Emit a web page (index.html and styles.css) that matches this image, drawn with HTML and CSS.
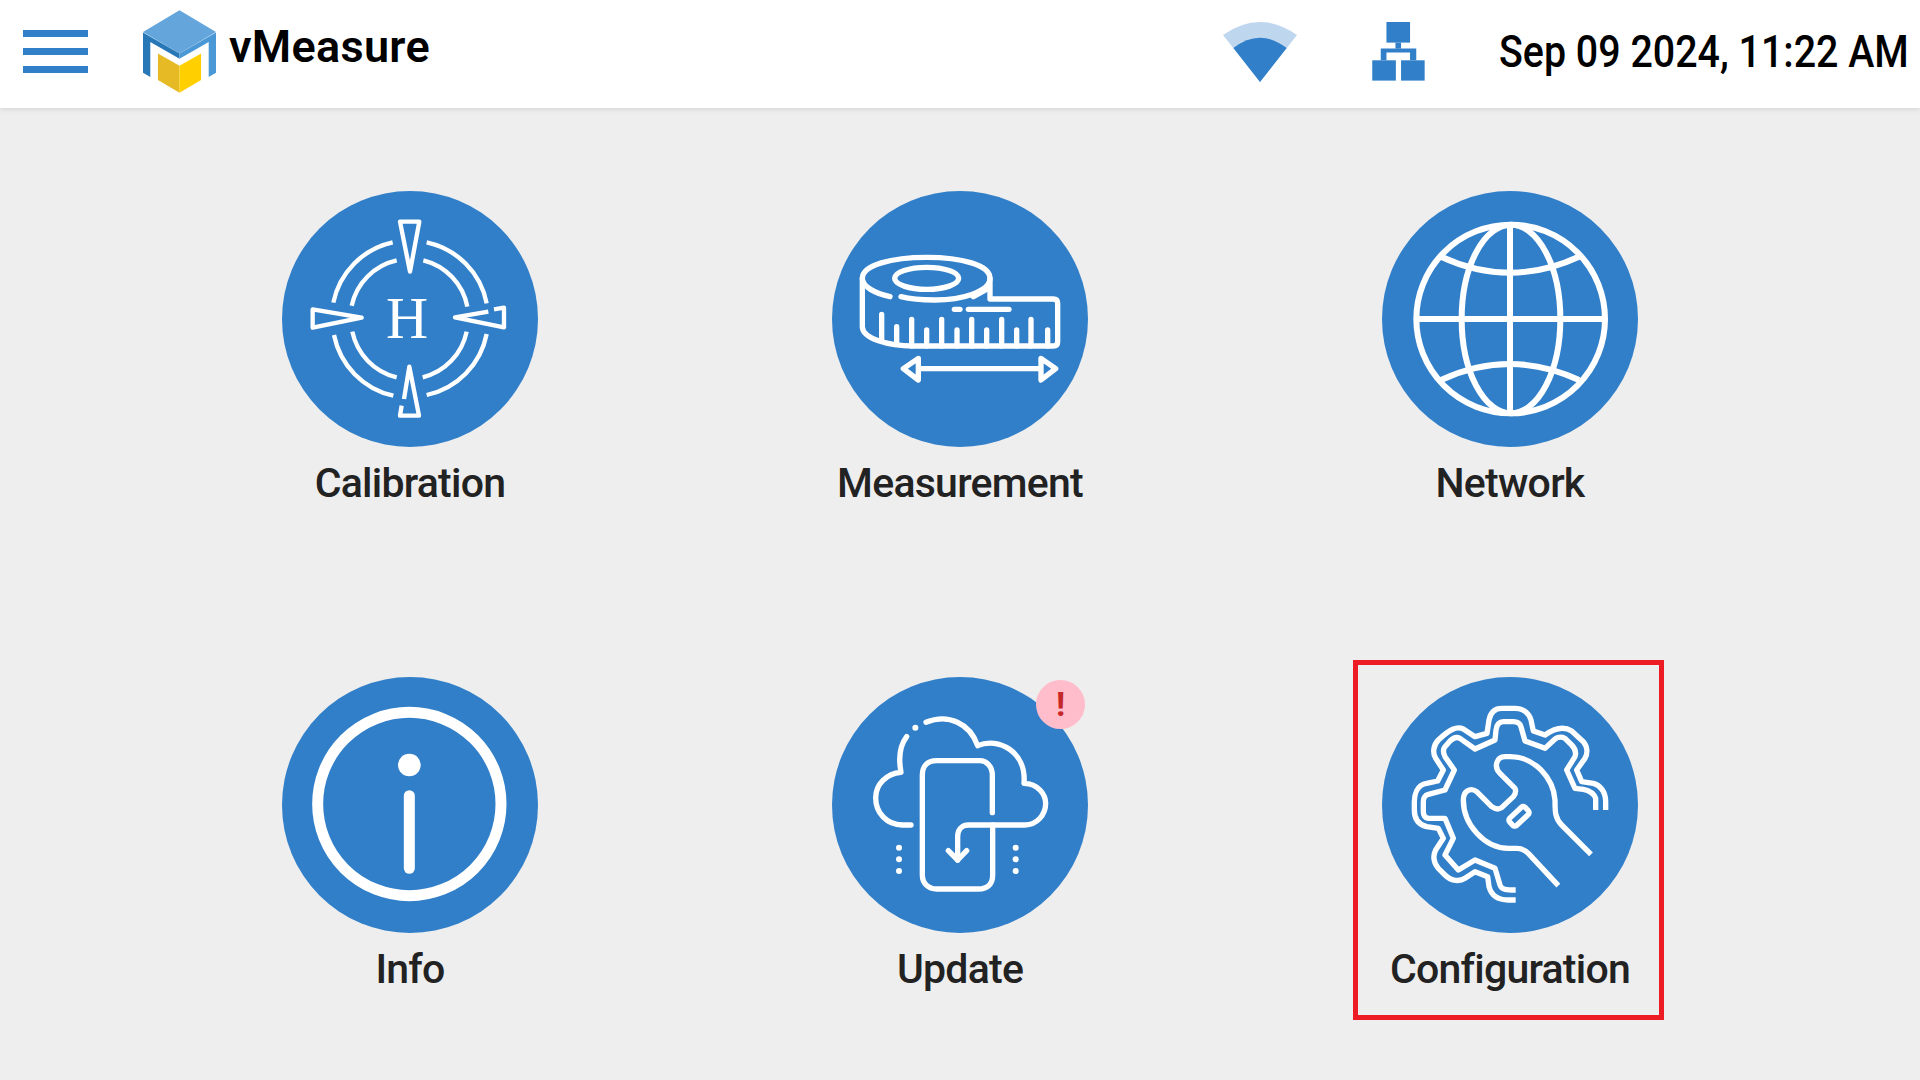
FILE: index.html
```html
<!DOCTYPE html>
<html lang="en">
<head>
  <meta charset="UTF-8">
  <meta name="viewport" content="width=device-width, initial-scale=1.0">
  <title>vMeasure</title>
  <link rel="stylesheet" href="styles.css">
</head>
<body>

  <header class="topbar">
    <div class="menu-btn">
      <span></span>
      <span></span>
      <span></span>
    </div>

    <svg class="logo" viewBox="430 30 220 248">
      <polygon fill="#64a6dc" points="430,95 540,30 650,95 540,160"/>
      <polygon fill="#2878b8" points="430,97 540,160 540,176 452,125 452,231 430,218"/>
      <polygon fill="#4a98d6" points="650,97 540,160 540,176 628,125 628,231 650,218"/>
      <polygon fill="#e5ba25" points="475,160 540,197 540,278 475,240"/>
      <polygon fill="#ffcf00" points="605,160 540,197 540,278 605,240"/>
    </svg>
    <div class="brand">vMeasure</div>

    <div class="status">
      <!-- Wifi -->
      <svg class="wifi-icon" viewBox="0 0 74 60">
        <path fill="#bed6ee" d="M0 13 Q37 -13 74 13 L37 60 Z"/>
        <path fill="#317fc9" d="M10.4 26 Q37 5.4 63.7 26 L37 60 Z"/>
      </svg>
      <!-- Wired network -->
      <svg class="lan-icon" viewBox="0 0 52.5 59">
        <g fill="#317fc9">
          <rect x="14.2" y="0" width="23.6" height="20.6"/>
          <rect x="23.2" y="20.6" width="5.6" height="6"/>
          <path d="M8.5 26.6 H44 V38.3 H37.8 V30.6 H14.2 V38.3 H8.5 Z"/>
          <rect x="0" y="38.3" width="23.6" height="20.3"/>
          <rect x="28.8" y="38.3" width="23.6" height="20.3"/>
        </g>
      </svg>
      <div class="clock">Sep 09 2024, 11:22 AM</div>
    </div>
  </header>

  <main class="tiles">

    <div class="tile">
      <div class="disc">
        <svg viewBox="36 33 768 768">
          <g class="line thin">
            <path d="M390 125 H448 L420 275 Z"/>
            <path d="M128 388 V443 L275 413 Z"/>
            <path d="M655 395 L555 412 L702 442 V383 L672 388"/>
            <path d="M402 657 L418 560 L447 707 H390 L395 677"/>
            <path d="M190 368 A233 233 0 0 1 368 187"/>
            <path d="M470 187 A233 233 0 0 1 650 370"/>
            <path d="M192 465 A233 233 0 0 0 370 647"/>
            <path d="M470 645 A233 233 0 0 0 650 462"/>
            <path d="M245 377 A178 178 0 0 1 380 241"/>
            <path d="M460 241 A178 178 0 0 1 592 380"/>
            <path d="M247 455 A178 178 0 0 0 380 592"/>
            <path d="M458 592 A178 178 0 0 0 590 455"/>
          </g>
          <text class="disc-letter" x="411" y="475">H</text>
        </svg>
      </div>
      <div class="tile-label">Calibration</div>
    </div>

    <div class="tile">
      <div class="disc">
        <svg viewBox="21 33 768 768">
          <g class="line round">
            <path d="M195 350 C150 340 112 320 112 295 C112 255 200 232 305 232 C410 232 495 255 495 295 C495 335 410 360 330 360 C290 360 255 357 228 350"/>
            <ellipse cx="305" cy="295" rx="96" ry="33"/>
            <path d="M112 295 V440 C112 475 190 498 265 498 H685 Q698 498 698 485 V370 Q698 357 685 357 H495 V295"/>
            <path d="M445 350 L490 325"/>
            <path d="M170 403 V480 M215 440 V490 M260 418 V498 M305 450 V498 M350 418 V498 M396 450 V498 M440 418 V498 M485 450 V498 M530 418 V498 M575 450 V498 M618 418 V498 M668 450 V498"/>
            <path d="M388 388 H405 M430 388 H552"/>
            <path d="M285 566 H645"/>
            <path d="M280 535 L235 566 L280 600 Z"/>
            <path d="M648 535 L692 566 L648 600 Z"/>
          </g>
        </svg>
      </div>
      <div class="tile-label">Measurement</div>
    </div>

    <div class="tile">
      <div class="disc">
        <svg viewBox="21 33 768 768">
          <g class="line thick">
            <circle cx="407" cy="417" r="283"/>
            <ellipse cx="408" cy="417" rx="148" ry="283"/>
            <path d="M405 135 V700"/>
            <path d="M124 417 H690"/>
            <path d="M198 230 Q405 326 612 230"/>
            <path d="M198 600 Q405 504 612 600"/>
          </g>
        </svg>
      </div>
      <div class="tile-label">Network</div>
    </div>

    <div class="tile">
      <div class="disc">
        <svg viewBox="36 36 768 768">
          <circle class="line info-ring" cx="418" cy="417" r="275"/>
          <circle class="dot" cx="418" cy="300" r="34"/>
          <path class="line info-ring round" d="M418 392 V610"/>
        </svg>
      </div>
      <div class="tile-label">Info</div>
    </div>

    <div class="tile">
      <div class="disc">
        <svg viewBox="21 36 768 768">
          <g class="line round">
            <path d="M258 480 H232 C185 480 152 443 152 398 C152 358 185 325 228 322 C222 290 222 245 245 215"/>
            <path d="M303 172 C370 145 435 175 458 242 C520 215 605 260 597 355 C640 355 662 390 662 415 C662 450 635 480 600 480 H430 C410 480 398 495 398 515 V585"/>
            <path d="M370 557 L398 585 L425 557"/>
            <path d="M502 443 V330 C502 305 485 287 465 287 H335 C305 287 292 305 292 330 V630 C292 655 310 672 335 672 H460 C490 672 503 655 503 630 V480"/>
          </g>
          <g class="dot">
            <circle cx="271" cy="188" r="9"/>
            <circle cx="222" cy="548" r="9"/>
            <circle cx="222" cy="583" r="9"/>
            <circle cx="222" cy="618" r="9"/>
            <circle cx="572" cy="548" r="9"/>
            <circle cx="572" cy="583" r="9"/>
            <circle cx="572" cy="618" r="9"/>
          </g>
        </svg>
        <span class="badge">!</span>
      </div>
      <div class="tile-label">Update</div>
    </div>

    <div class="tile">
      <div class="disc">
        <svg viewBox="111 66 768 768">
          <g class="line gear">
            <path d="M782 465 V440 C782 410 765 390 745 385 L710 380 L695 345 L720 310 C728 295 728 275 715 260 L680 228 C660 215 635 215 600 240 L565 228 L558 195 C550 170 530 160 510 160 H470 C445 160 436 175 432 195 L426 235 L390 245 L355 222 C335 213 315 222 280 255 C265 270 262 295 272 310 L295 345 L278 378 L245 385 C215 390 208 420 208 440 V465 C208 495 225 510 245 515 L280 520 L295 550 L272 585 C262 605 268 625 280 640 L300 660 C320 680 345 680 360 670 L390 650 L428 665 L432 695 C440 725 465 735 490 735 H512"/>
            <path d="M752 465 V430 C745 410 725 405 715 403 L690 400 L665 345 L690 305 C695 290 690 280 680 270 L660 250 C650 245 640 245 630 252 L600 280 L540 258 L528 215 C525 205 515 200 505 200 H475 C462 200 455 210 453 225 L450 255 L390 282 L345 250 C335 245 325 248 315 258 L300 275 C292 285 295 295 300 305 L328 345 L300 405 L250 418 C240 420 235 430 235 440 V470 C235 480 240 488 250 490 L300 490 L325 550 L300 600 L340 645 L390 615 L450 640 L465 690 C470 705 485 705 512 705"/>
            <path d="M738 598 L650 510 C630 490 630 470 630 435 C625 370 570 305 495 305 H480 C455 305 445 335 465 355 L510 400 C515 410 510 418 505 425 L470 458 C460 465 450 462 440 455 L395 410 C375 395 355 410 355 435 C355 510 420 580 490 580 H515 C530 580 540 585 550 595 L640 692"/>
            <rect x="-32" y="-15" width="64" height="30" rx="8" transform="translate(522 484) rotate(-43)"/>
          </g>
        </svg>
      </div>
      <div class="tile-label">Configuration</div>
      <div class="highlight"></div>
    </div>

  </main>

</body>
</html>
```

FILE: styles.css
```css
* {
  margin: 0;
  padding: 0;
  box-sizing: border-box;
}

body {
  font-family: Roboto, "Liberation Sans", sans-serif;
  height: 100vh;
  overflow: hidden;
  background-color: #eeeeee;
}

.topbar {
  display: flex;
  align-items: center;
  height: 108px;
  padding: 0 12px 5px 23px;
  background-color: white;
  box-shadow: 0 1px 5px rgba(0, 0, 0, 0.12);
}

.menu-btn {
  display: flex;
  flex-direction: column;
  gap: 11px;
  width: 65px;
}

.menu-btn span {
  height: 7px;
  background-color: #317fc9;
}

.logo {
  width: 73px;
  height: 83px;
  margin-left: 55px;
}

.brand {
  margin-left: 13px;
  margin-bottom: 10px;
  font-size: 45px;
  font-weight: 600;
  letter-spacing: 0.3px;
  color: black;
}

.status {
  display: flex;
  align-items: center;
  margin-left: auto;
}

.wifi-icon {
  width: 74px;
  height: 60px;
}

.lan-icon {
  width: 53px;
  height: 59px;
  margin-left: 75px;
}

/* the clock text is drawn narrower than plain Roboto */
.clock {
  width: 409px;
  margin-left: 74px;
  font-size: 44px;
  font-weight: 500;
  color: black;
  white-space: nowrap;
  transform: scaleX(0.895);
  transform-origin: left center;
}

.tiles {
  display: grid;
  grid-template-columns: repeat(3, 550px);
  grid-template-rows: 486px auto;
  justify-content: center;
  padding-top: 83px;
}

.tile {
  position: relative;
  display: flex;
  flex-direction: column;
  align-items: center;
}

.disc {
  position: relative;
  width: 256px;
  height: 256px;
  border-radius: 50%;
  background-color: #317fc9;
}

.disc svg {
  display: block;
  width: 256px;
  height: 256px;
}

.line {
  fill: none;
  stroke: white;
  stroke-width: 16;
}

.line.thin {
  stroke-width: 13;
  stroke-linejoin: round;
}

.line.gear {
  stroke-width: 16;
  stroke-linejoin: round;
}

.line.round {
  stroke-linecap: round;
  stroke-linejoin: round;
}

.line.thick {
  stroke-width: 18;
}

.line.info-ring {
  stroke-width: 33;
}

.dot {
  fill: white;
}

.disc-letter {
  font-family: "Liberation Serif", serif;
  font-size: 175px;
  text-anchor: middle;
  fill: white;
}

.tile-label {
  margin-top: 12px;
  font-size: 41px;
  font-weight: 500;
  letter-spacing: -0.75px;
  color: #222222;
}

.badge {
  position: absolute;
  left: 204px;
  top: 3px;
  width: 49px;
  height: 49px;
  border-radius: 50%;
  background-color: #ffbccb;
  color: #c62828;
  font-size: 34px;
  font-weight: 700;
  line-height: 49px;
  text-align: center;
}

/* red box round the selected tile */
.highlight {
  position: absolute;
  left: 118px;
  top: -17px;
  width: 311px;
  height: 360px;
  border: 5px solid #ed1c24;
}
```
